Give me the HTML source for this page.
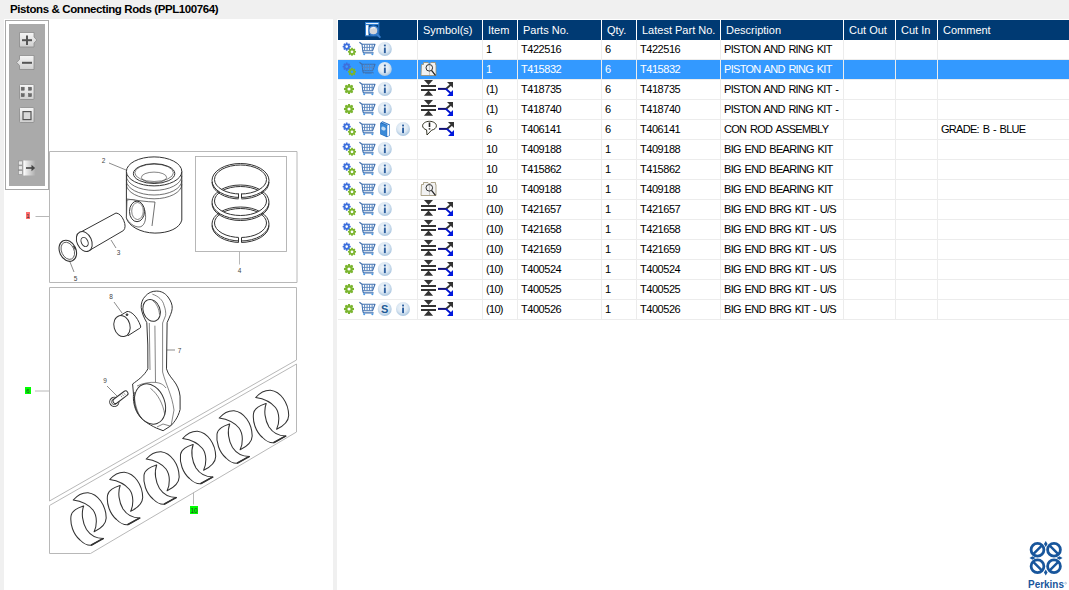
<!DOCTYPE html>
<html><head><meta charset="utf-8">
<style>
html,body{margin:0;padding:0;}
body{width:1069px;height:590px;overflow:hidden;background:#f0f0f0;position:relative;font-family:"Liberation Sans",sans-serif;}
#title{position:absolute;left:10px;top:2.3px;font-weight:bold;font-size:11.5px;letter-spacing:-0.4px;line-height:14px;color:#000;white-space:nowrap;}
#left{position:absolute;left:4px;top:20px;width:329px;height:570px;background:#fff;overflow:hidden;}
#right{position:absolute;left:337px;top:20px;width:732px;height:570px;background:#fff;overflow:hidden;}
.hd{position:absolute;top:0;height:20px;background:#003a73;}
.hdt{position:absolute;top:0;height:20px;line-height:20px;color:#fff;font-size:11px;white-space:nowrap;}
.row{position:absolute;left:1px;width:731px;height:19px;border-bottom:1px solid #ececec;}
.sel{background:#3399ff;}
.vl{position:absolute;top:20px;width:1px;height:280px;background:#ececec;}
.c{position:absolute;font-size:11px;letter-spacing:-0.7px;word-spacing:1.3px;line-height:19px;color:#000;white-space:nowrap;top:0;}
svg{overflow:visible;}
</style></head>
<body>

<div style="position:absolute;left:4px;top:19px;width:329px;height:1px;background:#fff"></div><div style="position:absolute;left:337px;top:19px;width:732px;height:1px;background:#fff"></div>
<div id="title">Pistons &amp; Connecting Rods (PPL100764)</div>
<div id="left"><svg style="position:absolute;left:0;top:0" width="329" height="570" viewBox="4 20 329 570">
<defs>
<linearGradient id="tabg" x1="0" y1="0" x2="1" y2="0"><stop offset="0" stop-color="#fafafa"/><stop offset="1" stop-color="#aaaaaa"/></linearGradient>
<linearGradient id="bg" x1="0" y1="0" x2="0" y2="1"><stop offset="0" stop-color="#f6f6f6"/><stop offset="1" stop-color="#cfcfcf"/></linearGradient>
<g id="pair" fill="#fff" stroke="#333" stroke-width="1.05" stroke-linejoin="round">
<path d="M73.2,500 C78,494.5 83,492.5 88,492.7 C98,494 106,505 106.2,518 C106,524 100,529 94.1,531.8 C97,526 97.5,516 93,510 C88.5,504.5 80,501 73.2,500 Z"/>
<path d="M83.7,506 C78,508 72,510 71,516 C70,524 73,534 80,540 C84,544 88,545.5 91,545.3 C95,543.5 99.5,540 103.5,538.4 C96,538.5 90.5,535.5 86.5,529.5 C82.5,523 81,513 83.7,506 Z"/>
<path d="M91,545.3l12.5,-6.9" stroke-width="1.6"/>
</g>
</defs>
<!-- toolbar -->
<rect x="5.5" y="20.5" width="43" height="169" fill="#fff" stroke="#a8a8a8"/>
<rect x="9" y="24" width="36" height="162" fill="#aaaaaa"/>
<g stroke="#8a8a8a" stroke-width="0.8">
<path d="M19.5,32.5h14.5v4.5l2.8,3l-2.8,3v4h-14.5z" fill="url(#bg)"/>
<path d="M19.5,55.5h14.5v14h-14.5v-4l-2.8,-3l2.8,-3z" fill="url(#bg)"/>
<rect x="19.5" y="84.5" width="14.5" height="15" rx="1" fill="url(#bg)"/>
<rect x="19.5" y="107.5" width="14.5" height="15" rx="1" fill="url(#bg)"/>
</g>
<g fill="#555">
<rect x="22" y="39.2" width="10" height="2"/><rect x="26" y="35.5" width="2" height="9.5"/>
<rect x="22" y="61.8" width="10" height="2"/>
</g><g fill="#6a6a6a" stroke="#5a5a5a" stroke-width="0.5">
<rect x="21.2" y="87.2" width="3" height="3"/><rect x="28.5" y="87.2" width="3" height="3"/>
<rect x="21.2" y="93.7" width="3" height="3"/><rect x="28.5" y="93.7" width="3" height="3"/>
</g>
<rect x="23" y="111.6" width="8" height="8" fill="#d8d8d8" stroke="#555" stroke-width="1.2"/>
<g>
<rect x="18.5" y="161" width="4" height="4" fill="#e8e8e8" stroke="#8a8a8a" stroke-width="0.6"/>
<rect x="18.5" y="165.8" width="4" height="4" fill="#e8e8e8" stroke="#8a8a8a" stroke-width="0.6"/>
<rect x="18.5" y="170.6" width="4" height="4" fill="#e8e8e8" stroke="#8a8a8a" stroke-width="0.6"/>
<rect x="23.7" y="160.5" width="12" height="15" fill="url(#tabg)"/>
<path d="M23.9,160.5v15" stroke="#fff" stroke-width="0.8"/>
<path d="M26,168h6.5" stroke="#444" stroke-width="1.6"/>
<path d="M31.5,164.7l3.6,3.3l-3.6,3.3z" fill="#444"/>
</g>
<!-- frames -->
<g fill="none" stroke="#b0b0b0" stroke-width="0.9">
<path d="M49.5,151.5h247.5v131h-247.5z"/>
<rect x="195.5" y="156.5" width="91" height="95"/>
<path d="M239.5,251.5v13"/>
<path d="M49.5,287.5h247v72.5l-247,141z"/>
<path d="M49.5,505.5l247,-141.5v68l-206,121.5h-41z"/>
<path d="M35.5,216.5h13.5M35,391h14M193.5,492.5v12"/>
</g>
<path d="M109,163l17,7M111,240l5,8M70,262l4,10M122,313l-8,-11M167,350h8M117,396l-10,-10" fill="none" stroke="#5a5a5a" stroke-width="0.7"/>
<!-- label boxes -->
<rect x="26" y="212" width="4" height="7" fill="#ff6e6e"/>
<rect x="25" y="387" width="6" height="7" fill="#00ff00"/>
<rect x="190" y="506" width="8" height="8" fill="#00ff00"/>
<g font-family="Liberation Sans" font-size="6" fill="#333" text-anchor="middle">
<text x="28" y="218">1</text><text x="28" y="392.8">6</text><text x="194" y="512.5" font-size="6.5">10</text>
</g>
<g font-family="Liberation Sans" font-size="6.5" fill="#444" text-anchor="middle">
<text x="103.5" y="163">2</text>
<text x="118.5" y="255">3</text>
<text x="239.5" y="272.5">4</text>
<text x="75.5" y="281">5</text>
<text x="179.5" y="353">7</text>
<text x="111" y="299">8</text>
<text x="105" y="383">9</text>
</g>
<!-- parts -->
<g fill="#fff" stroke="#333" stroke-width="1" stroke-linejoin="round">
<!-- rings -->
<g id="ring3">
<path fill-rule="evenodd" d="M212,224a28.5,17 0 1,0 57,0a28.5,17 0 1,0 -57,0zM214.5,223a26,14.5 0 1,0 52,0a26,14.5 0 1,0 -52,0z"/>
<path fill="none" d="M212,225.5a28.5,17 0 0,0 57,0"/>
</g>
<path fill-rule="evenodd" d="M212,202a28.5,17 0 1,0 57,0a28.5,17 0 1,0 -57,0zM214.5,201a26,14.5 0 1,0 52,0a26,14.5 0 1,0 -52,0z"/>
<path fill="none" d="M212,203.5a28.5,17 0 0,0 57,0"/>
<path fill-rule="evenodd" d="M212,180.5a28.5,17 0 1,0 57,0a28.5,17 0 1,0 -57,0zM214.5,179.5a26,14.5 0 1,0 52,0a26,14.5 0 1,0 -52,0z"/>
<path fill="none" d="M212,182a28.5,17 0 0,0 57,0"/>
<g stroke="none" fill="#fff">
<rect x="238.5" y="192" width="3" height="8"/><rect x="238.5" y="236" width="3" height="8"/>
</g>
<path fill="none" d="M238.5,193.5v5M241.5,193.5v5M238.5,237.5v5M241.5,237.5v5"/>
<!-- piston -->
<path d="M126.4,171.4v46.5c2,8 14,15 28.5,15.2c14,0 25,-5 26.9,-13v-48.7z"/>
<ellipse cx="154.1" cy="171.4" rx="27.7" ry="14.5"/>
<ellipse cx="154.1" cy="173.6" rx="20.7" ry="9.9" fill="none"/>
<ellipse cx="154.1" cy="172.8" rx="19.3" ry="8.7" fill="none" stroke-width="0.6"/>
<ellipse cx="154" cy="177.4" rx="12.6" ry="5.3" fill="none" stroke-width="0.6"/>
<path fill="none" d="M126.4,175.9a27.7,14.5 0 0,0 55.4,0M126.4,180.5a27.7,14.5 0 0,0 55.4,0M126.4,184.3a27.7,14.5 0 0,0 55.4,0" stroke-width="0.7"/>
<path fill="none" stroke-width="0.7" d="M127,199c8,1 20,3 28,3M155,202l-3,24"/>
<path d="M127,200c8,-2 16,3 18,11c2,9 -1,16 -6,16c-5,0 -10,-4 -12.6,-9z" stroke-width="0.7"/>
<ellipse cx="137" cy="211.4" rx="7.5" ry="10.3"/>
<ellipse cx="137.5" cy="211" rx="5.8" ry="8.5" fill="none" stroke-width="0.6"/>
<!-- pin -->
<path d="M80.5,232.2L116,213a6,10 -25 0,1 7.5,17.5L89.1,250.6z"/>
<ellipse cx="84.3" cy="241.5" rx="7.3" ry="10.5" transform="rotate(-25 84.3 241.5)"/>
<ellipse cx="84.6" cy="242" rx="3.3" ry="4.8" transform="rotate(-25 84.6 242)"/>
<!-- circlip -->
<ellipse cx="67.8" cy="250.8" rx="8.2" ry="11" transform="rotate(-25 67.8 250.8)" fill="none" stroke-width="1.1"/>
<ellipse cx="67.8" cy="250.8" rx="6.2" ry="9" transform="rotate(-25 67.8 250.8)" fill="none" stroke-width="0.7"/>
<path d="M73.5,246l2,3.5" stroke-width="1.3"/>
<!-- bush -->
<path d="M120,315.7L127,311.5C131,311 137,316 140.6,326C141,327.5 140,328.5 138.2,329.2L128,335.7z"/>
<ellipse cx="122" cy="326" rx="8" ry="10.7" transform="rotate(-15 122 326)"/>
<circle cx="127" cy="314.7" r="0.9" fill="#444"/>
<!-- bolt -->
<g transform="translate(114.3,401.9) rotate(-37)">
<circle r="4.6"/><circle r="2.8" fill="none" stroke-width="0.7"/>
<rect x="-1" y="-2.5" width="17.5" height="5" rx="2.5"/>
<path d="M9,-1v2M11,-1v2M13,-1v2" stroke-width="0.5"/>
</g>
<!-- con rod -->
<path d="M156.4,291.1C161,291 165,293 168,297C171,301 172.5,305 172.2,308.4C172,312 170,316 167.1,322.6L166.5,368.8C168,375 173,379 176,384C179,389 180.5,395 180.1,400L180.1,409.5C178,418 173,424 169.9,426.4L163.1,430.7L156.4,428.1C148,424 142,420 138,414C134,408 133,400 133.5,394.2L132.6,384C138,380 144,376 147.9,368.8L147.8,345L146.8,322.6C144,318 141.5,312 141.2,307.4C141,303 142.5,299 145.3,296.2C148,293 152,291 156.4,291.1Z"/>
<ellipse cx="151.6" cy="310.4" rx="8.4" ry="11.2" transform="rotate(-20 151.6 310.4)"/>
<ellipse cx="150" cy="404" rx="14.8" ry="20.7" transform="rotate(-20 150 404)"/>
<path fill="none" stroke-width="0.6" d="M152.4,294.2C158,296 163,300 164,305.3C165.5,309 166,313 165.6,315.5L162.6,323L162.6,372C166,385 172,395 174,410L171,426M149.3,323L150,370M154.9,325.7L155.5,382.4M137,386C143,383 150,382 155.5,382.4C160,383 163,384 166,388M134.5,392C134,402 137,413 142,419M152.4,300.3C157,304 159,309 159.5,314.5M150.4,388.3C158,394 163,404 164.8,414.6M157,427l6,-3l7,2"/>
</g>
<!-- bearing shells -->
<g transform="translate(0,0)" fill="#fff" stroke="#333" stroke-width="1.05" stroke-linejoin="round">
<path d="M73.2,500 C78,494.5 83,492.5 88,492.7 C98,494 106,505 106.2,518 C106,524 100,529 94.1,531.8 C97,526 97.5,516 93,510 C88.5,504.5 80,501 73.2,500 Z"/>
<path d="M83.7,506 C78,508 72,510 71,516 C70,524 73,534 80,540 C84,544 88,545.5 91,545.3 C95,543.5 99.5,540 103.5,538.4 C96,538.5 90.5,535.5 86.5,529.5 C82.5,523 81,513 83.7,506 Z"/>
<path d="M91,545.3l12.5,-6.9" stroke-width="1.6"/>
</g>
<g transform="translate(36.5,-20.5)" fill="#fff" stroke="#333" stroke-width="1.05" stroke-linejoin="round">
<path d="M73.2,500 C78,494.5 83,492.5 88,492.7 C98,494 106,505 106.2,518 C106,524 100,529 94.1,531.8 C97,526 97.5,516 93,510 C88.5,504.5 80,501 73.2,500 Z"/>
<path d="M83.7,506 C78,508 72,510 71,516 C70,524 73,534 80,540 C84,544 88,545.5 91,545.3 C95,543.5 99.5,540 103.5,538.4 C96,538.5 90.5,535.5 86.5,529.5 C82.5,523 81,513 83.7,506 Z"/>
<path d="M91,545.3l12.5,-6.9" stroke-width="1.6"/>
</g>
<g transform="translate(73,-41)" fill="#fff" stroke="#333" stroke-width="1.05" stroke-linejoin="round">
<path d="M73.2,500 C78,494.5 83,492.5 88,492.7 C98,494 106,505 106.2,518 C106,524 100,529 94.1,531.8 C97,526 97.5,516 93,510 C88.5,504.5 80,501 73.2,500 Z"/>
<path d="M83.7,506 C78,508 72,510 71,516 C70,524 73,534 80,540 C84,544 88,545.5 91,545.3 C95,543.5 99.5,540 103.5,538.4 C96,538.5 90.5,535.5 86.5,529.5 C82.5,523 81,513 83.7,506 Z"/>
<path d="M91,545.3l12.5,-6.9" stroke-width="1.6"/>
</g>
<g transform="translate(109.5,-61.5)" fill="#fff" stroke="#333" stroke-width="1.05" stroke-linejoin="round">
<path d="M73.2,500 C78,494.5 83,492.5 88,492.7 C98,494 106,505 106.2,518 C106,524 100,529 94.1,531.8 C97,526 97.5,516 93,510 C88.5,504.5 80,501 73.2,500 Z"/>
<path d="M83.7,506 C78,508 72,510 71,516 C70,524 73,534 80,540 C84,544 88,545.5 91,545.3 C95,543.5 99.5,540 103.5,538.4 C96,538.5 90.5,535.5 86.5,529.5 C82.5,523 81,513 83.7,506 Z"/>
<path d="M91,545.3l12.5,-6.9" stroke-width="1.6"/>
</g>
<g transform="translate(146,-82)" fill="#fff" stroke="#333" stroke-width="1.05" stroke-linejoin="round">
<path d="M73.2,500 C78,494.5 83,492.5 88,492.7 C98,494 106,505 106.2,518 C106,524 100,529 94.1,531.8 C97,526 97.5,516 93,510 C88.5,504.5 80,501 73.2,500 Z"/>
<path d="M83.7,506 C78,508 72,510 71,516 C70,524 73,534 80,540 C84,544 88,545.5 91,545.3 C95,543.5 99.5,540 103.5,538.4 C96,538.5 90.5,535.5 86.5,529.5 C82.5,523 81,513 83.7,506 Z"/>
<path d="M91,545.3l12.5,-6.9" stroke-width="1.6"/>
</g>
<g transform="translate(182.5,-102.5)" fill="#fff" stroke="#333" stroke-width="1.05" stroke-linejoin="round">
<path d="M73.2,500 C78,494.5 83,492.5 88,492.7 C98,494 106,505 106.2,518 C106,524 100,529 94.1,531.8 C97,526 97.5,516 93,510 C88.5,504.5 80,501 73.2,500 Z"/>
<path d="M83.7,506 C78,508 72,510 71,516 C70,524 73,534 80,540 C84,544 88,545.5 91,545.3 C95,543.5 99.5,540 103.5,538.4 C96,538.5 90.5,535.5 86.5,529.5 C82.5,523 81,513 83.7,506 Z"/>
<path d="M91,545.3l12.5,-6.9" stroke-width="1.6"/>
</g>
</svg>
</div>
<div id="right"><div class="hd" style="left:1px;width:79px"></div><div class="hd" style="left:81px;width:64px"></div><div class="hdt" style="left:86px">Symbol(s)</div><div class="hd" style="left:146px;width:34px"></div><div class="hdt" style="left:151px">Item</div><div class="hd" style="left:181px;width:83px"></div><div class="hdt" style="left:186px">Parts No.</div><div class="hd" style="left:265px;width:34px"></div><div class="hdt" style="left:270px">Qty.</div><div class="hd" style="left:300px;width:83px"></div><div class="hdt" style="left:305px">Latest Part No.</div><div class="hd" style="left:384px;width:122px"></div><div class="hdt" style="left:389px">Description</div><div class="hd" style="left:507px;width:51px"></div><div class="hdt" style="left:512px">Cut Out</div><div class="hd" style="left:559px;width:41px"></div><div class="hdt" style="left:564px">Cut In</div><div class="hd" style="left:601px;width:131px"></div><div class="hdt" style="left:606px">Comment</div><div class="row" style="top:20px"></div><div class="row sel" style="top:40px"></div><div class="row" style="top:60px"></div><div class="row" style="top:80px"></div><div class="row" style="top:100px"></div><div class="row" style="top:120px"></div><div class="row" style="top:140px"></div><div class="row" style="top:160px"></div><div class="row" style="top:180px"></div><div class="row" style="top:200px"></div><div class="row" style="top:220px"></div><div class="row" style="top:240px"></div><div class="row" style="top:260px"></div><div class="row" style="top:280px"></div><div class="vl" style="left:80px"></div><div class="vl" style="left:145px"></div><div class="vl" style="left:180px"></div><div class="vl" style="left:264px"></div><div class="vl" style="left:299px"></div><div class="vl" style="left:383px"></div><div class="vl" style="left:506px"></div><div class="vl" style="left:558px"></div><div class="vl" style="left:600px"></div><div class="c" style="left:149px;top:20px;color:#000;">1</div><div class="c" style="left:184px;top:20px;color:#000;letter-spacing:-0.45px;">T422516</div><div class="c" style="left:268px;top:20px;color:#000;">6</div><div class="c" style="left:303px;top:20px;color:#000;letter-spacing:-0.45px;">T422516</div><div class="c" style="left:387px;top:20px;color:#000;">PISTON AND RING KIT</div><div class="c" style="left:149px;top:40px;color:#fff;">1</div><div class="c" style="left:184px;top:40px;color:#fff;letter-spacing:-0.45px;">T415832</div><div class="c" style="left:268px;top:40px;color:#fff;">6</div><div class="c" style="left:303px;top:40px;color:#fff;letter-spacing:-0.45px;">T415832</div><div class="c" style="left:387px;top:40px;color:#fff;">PISTON AND RING KIT</div><div class="c" style="left:149px;top:60px;color:#000;">(1)</div><div class="c" style="left:184px;top:60px;color:#000;letter-spacing:-0.45px;">T418735</div><div class="c" style="left:268px;top:60px;color:#000;">6</div><div class="c" style="left:303px;top:60px;color:#000;letter-spacing:-0.45px;">T418735</div><div class="c" style="left:387px;top:60px;color:#000;">PISTON AND RING KIT -</div><div class="c" style="left:149px;top:80px;color:#000;">(1)</div><div class="c" style="left:184px;top:80px;color:#000;letter-spacing:-0.45px;">T418740</div><div class="c" style="left:268px;top:80px;color:#000;">6</div><div class="c" style="left:303px;top:80px;color:#000;letter-spacing:-0.45px;">T418740</div><div class="c" style="left:387px;top:80px;color:#000;">PISTON AND RING KIT -</div><div class="c" style="left:149px;top:100px;color:#000;">6</div><div class="c" style="left:184px;top:100px;color:#000;letter-spacing:-0.45px;">T406141</div><div class="c" style="left:268px;top:100px;color:#000;">6</div><div class="c" style="left:303px;top:100px;color:#000;letter-spacing:-0.45px;">T406141</div><div class="c" style="left:387px;top:100px;color:#000;">CON ROD ASSEMBLY</div><div class="c" style="left:604px;top:100px;color:#000;">GRADE: B - BLUE</div><div class="c" style="left:149px;top:120px;color:#000;">10</div><div class="c" style="left:184px;top:120px;color:#000;letter-spacing:-0.45px;">T409188</div><div class="c" style="left:268px;top:120px;color:#000;">1</div><div class="c" style="left:303px;top:120px;color:#000;letter-spacing:-0.45px;">T409188</div><div class="c" style="left:387px;top:120px;color:#000;">BIG END BEARING KIT</div><div class="c" style="left:149px;top:140px;color:#000;">10</div><div class="c" style="left:184px;top:140px;color:#000;letter-spacing:-0.45px;">T415862</div><div class="c" style="left:268px;top:140px;color:#000;">1</div><div class="c" style="left:303px;top:140px;color:#000;letter-spacing:-0.45px;">T415862</div><div class="c" style="left:387px;top:140px;color:#000;">BIG END BEARING KIT</div><div class="c" style="left:149px;top:160px;color:#000;">10</div><div class="c" style="left:184px;top:160px;color:#000;letter-spacing:-0.45px;">T409188</div><div class="c" style="left:268px;top:160px;color:#000;">1</div><div class="c" style="left:303px;top:160px;color:#000;letter-spacing:-0.45px;">T409188</div><div class="c" style="left:387px;top:160px;color:#000;">BIG END BEARING KIT</div><div class="c" style="left:149px;top:180px;color:#000;">(10)</div><div class="c" style="left:184px;top:180px;color:#000;letter-spacing:-0.45px;">T421657</div><div class="c" style="left:268px;top:180px;color:#000;">1</div><div class="c" style="left:303px;top:180px;color:#000;letter-spacing:-0.45px;">T421657</div><div class="c" style="left:387px;top:180px;color:#000;">BIG END BRG KIT - U/S</div><div class="c" style="left:149px;top:200px;color:#000;">(10)</div><div class="c" style="left:184px;top:200px;color:#000;letter-spacing:-0.45px;">T421658</div><div class="c" style="left:268px;top:200px;color:#000;">1</div><div class="c" style="left:303px;top:200px;color:#000;letter-spacing:-0.45px;">T421658</div><div class="c" style="left:387px;top:200px;color:#000;">BIG END BRG KIT - U/S</div><div class="c" style="left:149px;top:220px;color:#000;">(10)</div><div class="c" style="left:184px;top:220px;color:#000;letter-spacing:-0.45px;">T421659</div><div class="c" style="left:268px;top:220px;color:#000;">1</div><div class="c" style="left:303px;top:220px;color:#000;letter-spacing:-0.45px;">T421659</div><div class="c" style="left:387px;top:220px;color:#000;">BIG END BRG KIT - U/S</div><div class="c" style="left:149px;top:240px;color:#000;">(10)</div><div class="c" style="left:184px;top:240px;color:#000;letter-spacing:-0.45px;">T400524</div><div class="c" style="left:268px;top:240px;color:#000;">1</div><div class="c" style="left:303px;top:240px;color:#000;letter-spacing:-0.45px;">T400524</div><div class="c" style="left:387px;top:240px;color:#000;">BIG END BRG KIT - U/S</div><div class="c" style="left:149px;top:260px;color:#000;">(10)</div><div class="c" style="left:184px;top:260px;color:#000;letter-spacing:-0.45px;">T400525</div><div class="c" style="left:268px;top:260px;color:#000;">1</div><div class="c" style="left:303px;top:260px;color:#000;letter-spacing:-0.45px;">T400525</div><div class="c" style="left:387px;top:260px;color:#000;">BIG END BRG KIT - U/S</div><div class="c" style="left:149px;top:280px;color:#000;">(10)</div><div class="c" style="left:184px;top:280px;color:#000;letter-spacing:-0.45px;">T400526</div><div class="c" style="left:268px;top:280px;color:#000;">1</div><div class="c" style="left:303px;top:280px;color:#000;letter-spacing:-0.45px;">T400526</div><div class="c" style="left:387px;top:280px;color:#000;">BIG END BRG KIT - U/S</div><svg style="position:absolute;left:0;top:0" width="732" height="570" viewBox="337 20 732 570">
<defs>
<radialGradient id="ig" cx="0.45" cy="0.4" r="0.6">
<stop offset="0" stop-color="#f4f8fc"/><stop offset="0.6" stop-color="#dce8f3"/><stop offset="1" stop-color="#a9c5df"/>
</radialGradient>
<g id="gearB">
<path fill="#3d6fdc" d="M-1.04,-2.81 L-0.72,-4.04 L0.72,-4.04 L1.04,-2.81 L1.26,-2.72 L2.34,-3.36 L3.36,-2.34 L2.72,-1.26 L2.81,-1.04 L4.04,-0.72 L4.04,0.72 L2.81,1.04 L2.72,1.26 L3.36,2.34 L2.34,3.36 L1.26,2.72 L1.04,2.81 L0.72,4.04 L-0.72,4.04 L-1.04,2.81 L-1.26,2.72 L-2.34,3.36 L-3.36,2.34 L-2.72,1.26 L-2.81,1.04 L-4.04,0.72 L-4.04,-0.72 L-2.81,-1.04 L-2.72,-1.26 L-3.36,-2.34 L-2.34,-3.36 L-1.26,-2.72Z M1.3,0 A1.3,1.3 0 1,0 -1.3,0 A1.3,1.3 0 1,0 1.3,0Z" fill-rule="evenodd"/>
</g>
<g id="gearG">
<path fill="#7ab42e" d="M-1.04,-2.81 L-0.72,-4.04 L0.72,-4.04 L1.04,-2.81 L1.26,-2.72 L2.34,-3.36 L3.36,-2.34 L2.72,-1.26 L2.81,-1.04 L4.04,-0.72 L4.04,0.72 L2.81,1.04 L2.72,1.26 L3.36,2.34 L2.34,3.36 L1.26,2.72 L1.04,2.81 L0.72,4.04 L-0.72,4.04 L-1.04,2.81 L-1.26,2.72 L-2.34,3.36 L-3.36,2.34 L-2.72,1.26 L-2.81,1.04 L-4.04,0.72 L-4.04,-0.72 L-2.81,-1.04 L-2.72,-1.26 L-3.36,-2.34 L-2.34,-3.36 L-1.26,-2.72Z M1.4,0 A1.4,1.4 0 1,0 -1.4,0 A1.4,1.4 0 1,0 1.4,0Z" fill-rule="evenodd"/>
</g>
<g id="gearG1">
<path fill="#7ab52f" d="M-1.32,-3.57 L-0.90,-5.02 L0.90,-5.02 L1.32,-3.57 L1.59,-3.45 L2.92,-4.18 L4.18,-2.92 L3.45,-1.59 L3.57,-1.32 L5.02,-0.90 L5.02,0.90 L3.57,1.32 L3.45,1.59 L4.18,2.92 L2.92,4.18 L1.59,3.45 L1.32,3.57 L0.90,5.02 L-0.90,5.02 L-1.32,3.57 L-1.59,3.45 L-2.92,4.18 L-4.18,2.92 L-3.45,1.59 L-3.57,1.32 L-5.02,0.90 L-5.02,-0.90 L-3.57,-1.32 L-3.45,-1.59 L-4.18,-2.92 L-2.92,-4.18 L-1.59,-3.45Z M1.6,0 A1.6,1.6 0 1,0 -1.6,0 A1.6,1.6 0 1,0 1.6,0Z" fill-rule="evenodd"/>
</g>
<g id="cart" fill="none" stroke="#3f6fae" stroke-width="1.1" stroke-linejoin="round">
<path d="M0.4,0.2L3,2.2L3.8,8.8L4.4,10.9H14.6"/>
<path d="M3,2.2H16L13.5,8.8H3.8"/>
<path d="M5.6,2.5v6M8.1,2.5v6M10.6,2.5v6M13.1,2.5v6" stroke="#5a86bf" stroke-width="1"/>
<path d="M3.4,5.4h11.4" stroke="#5a86bf" stroke-width="0.9"/>
<circle cx="5.2" cy="12.3" r="1" fill="#4a9ae6" stroke="none"/>
<circle cx="13.4" cy="12.3" r="1" fill="#4a9ae6" stroke="none"/>
</g>
<g id="info">
<circle r="7" fill="url(#ig)"/>
<rect x="-0.9" y="-4.4" width="1.9" height="1.8" fill="#2d5f9f"/>
<rect x="-0.9" y="-1.4" width="1.9" height="5.5" fill="#2d5f9f"/>
</g>
<g id="sico">
<circle r="7" fill="url(#ig)"/>
<text x="0" y="4" text-anchor="middle" font-family="Liberation Sans" font-weight="bold" font-size="11" fill="#1d5a96">S</text>
</g>
<g id="book">
<path d="M0.2,2L2.5,0.2L10,3.6L10,14.6L6.9,16.2L0.2,13.2z" fill="#1f68bc"/>
<path d="M0.6,2.2L6.8,4.6L6.8,15.6L0.6,13z" fill="#3a8ad8"/>
<path d="M7.2,4.4L9.4,3.6L9.4,14.4L7.2,15.2z" fill="#fafcff"/>
<ellipse cx="3.5" cy="7.6" rx="2.3" ry="1.8" fill="#c4dcf2" transform="rotate(25 3.5 7.6)"/>
<path d="M2,1.3l6,2.6" stroke="#9cc6ee" stroke-width="0.8"/>
</g>
<g id="bkmag">
<path d="M0.5,2.5h2v-2h4.5l1.5,1.5l1.5,-1.5h4.5v2h0.5v11h-15z" fill="#f2f2f2" stroke="#9b8f70" stroke-width="0.8"/>
<path d="M8.5,2v11" stroke="#aaa" stroke-width="0.6"/>
<circle cx="8.3" cy="5.8" r="3.3" fill="none" stroke="#333" stroke-width="1"/>
<path d="M10.5,8.3l4,5" stroke="#222" stroke-width="1.3"/>
</g>
<g id="cut" fill="#333">
<path d="M3,-1h9l-4.5,5z"/>
<rect x="0" y="4" width="15" height="2"/>
<rect x="0" y="8" width="15" height="2"/>
<path d="M7.5,9.6l4.6,5.1h-9.2z"/>
</g>
<g id="arr">
<path d="M0,6.9h8.5" stroke="#111177" stroke-width="2"/>
<path d="M8,7l5,-4.5" stroke="#333" stroke-width="1.8"/>
<path d="M9,0h6v6z" fill="#333"/>
<path d="M8,7l5,4.5" stroke="#0010cc" stroke-width="1.8"/>
<path d="M9,14h6v-6z" fill="#0018dd"/>
</g>
<g id="bub">
<path d="M4,8.5C1.6,7.8 0,6.2 0,4.4C0,1.9 3.1,-0.1 6.9,-0.1C10.7,-0.1 13.8,1.9 13.8,4.4C13.8,6.6 11.6,8.3 9.1,8.7L4.4,13.6Z" fill="#fff" stroke="#2a2a1a" stroke-width="0.95" stroke-linejoin="round"/>
<rect x="6.1" y="1" width="1.6" height="4.6" fill="#222"/>
<rect x="6.1" y="6.8" width="1.6" height="1.4" fill="#222"/>
</g>
<g id="hdico">
<rect x="0.5" y="0.5" width="13.3" height="13.3" fill="none" stroke="#2f7fd2" stroke-width="1"/>
<rect x="0.5" y="0.5" width="13.3" height="2.6" fill="#2f7fd2"/>
<rect x="1" y="1.1" width="12.3" height="0.9" fill="#fff"/>
<rect x="1" y="3.1" width="2.6" height="10.2" fill="#fff"/>
<path d="M3.6,4.6v0.8M3.6,6.6v0.8M3.6,8.6v0.8M3.6,10.6v0.8" stroke="#2f7fd2" stroke-width="0.9"/>
<circle cx="8.4" cy="8.5" r="4.5" fill="#d4d6da" stroke="#3a7fd0" stroke-width="1.3"/>
<path d="M6.5,6.5a3,3 0 0,1 3.5,-0.5" stroke="#fff" stroke-width="0.9" fill="none"/>
<path d="M11.4,11.8l4,3.8" stroke="#3a80d0" stroke-width="2"/>
</g>
</defs>
<g transform="translate(365,22)">
<rect x="0.5" y="0.5" width="13.3" height="13.3" fill="none" stroke="#2f7fd2" stroke-width="1"/>
<rect x="0.5" y="0.5" width="13.3" height="2.6" fill="#2f7fd2"/>
<rect x="1" y="1.1" width="12.3" height="0.9" fill="#fff"/>
<rect x="1" y="3.1" width="2.6" height="10.2" fill="#fff"/>
<path d="M3.6,4.6v0.8M3.6,6.6v0.8M3.6,8.6v0.8M3.6,10.6v0.8" stroke="#2f7fd2" stroke-width="0.9"/>
<circle cx="8.4" cy="8.5" r="4.5" fill="#d4d6da" stroke="#3a7fd0" stroke-width="1.3"/>
<path d="M6.5,6.5a3,3 0 0,1 3.5,-0.5" stroke="#fff" stroke-width="0.9" fill="none"/>
<path d="M11.4,11.8l4,3.8" stroke="#3a80d0" stroke-width="2"/>
</g>
<g transform="translate(346.7,46.6)">
<path fill="#3d6fdc" d="M-1.04,-2.81 L-0.72,-4.04 L0.72,-4.04 L1.04,-2.81 L1.26,-2.72 L2.34,-3.36 L3.36,-2.34 L2.72,-1.26 L2.81,-1.04 L4.04,-0.72 L4.04,0.72 L2.81,1.04 L2.72,1.26 L3.36,2.34 L2.34,3.36 L1.26,2.72 L1.04,2.81 L0.72,4.04 L-0.72,4.04 L-1.04,2.81 L-1.26,2.72 L-2.34,3.36 L-3.36,2.34 L-2.72,1.26 L-2.81,1.04 L-4.04,0.72 L-4.04,-0.72 L-2.81,-1.04 L-2.72,-1.26 L-3.36,-2.34 L-2.34,-3.36 L-1.26,-2.72Z M1.3,0 A1.3,1.3 0 1,0 -1.3,0 A1.3,1.3 0 1,0 1.3,0Z" fill-rule="evenodd"/>
</g><g transform="translate(352,51.8)">
<path fill="#7ab42e" d="M-1.04,-2.81 L-0.72,-4.04 L0.72,-4.04 L1.04,-2.81 L1.26,-2.72 L2.34,-3.36 L3.36,-2.34 L2.72,-1.26 L2.81,-1.04 L4.04,-0.72 L4.04,0.72 L2.81,1.04 L2.72,1.26 L3.36,2.34 L2.34,3.36 L1.26,2.72 L1.04,2.81 L0.72,4.04 L-0.72,4.04 L-1.04,2.81 L-1.26,2.72 L-2.34,3.36 L-3.36,2.34 L-2.72,1.26 L-2.81,1.04 L-4.04,0.72 L-4.04,-0.72 L-2.81,-1.04 L-2.72,-1.26 L-3.36,-2.34 L-2.34,-3.36 L-1.26,-2.72Z M1.4,0 A1.4,1.4 0 1,0 -1.4,0 A1.4,1.4 0 1,0 1.4,0Z" fill-rule="evenodd"/>
</g><g transform="translate(359,42)" fill="none" stroke="#3f6fae" stroke-width="1.1" stroke-linejoin="round">
<path d="M0.4,0.2L3,2.2L3.8,8.8L4.4,10.9H14.6"/>
<path d="M3,2.2H16L13.5,8.8H3.8"/>
<path d="M5.6,2.5v6M8.1,2.5v6M10.6,2.5v6M13.1,2.5v6" stroke="#5a86bf" stroke-width="1"/>
<path d="M3.4,5.4h11.4" stroke="#5a86bf" stroke-width="0.9"/>
<circle cx="5.2" cy="12.3" r="1" fill="#4a9ae6" stroke="none"/>
<circle cx="13.4" cy="12.3" r="1" fill="#4a9ae6" stroke="none"/>
</g><g transform="translate(384.8,49)">
<circle r="7" fill="url(#ig)"/>
<rect x="-0.9" y="-4.4" width="1.9" height="1.8" fill="#2d5f9f"/>
<rect x="-0.9" y="-1.4" width="1.9" height="5.5" fill="#2d5f9f"/>
</g><g transform="translate(346.7,66.6)">
<path fill="#3d6fdc" d="M-1.04,-2.81 L-0.72,-4.04 L0.72,-4.04 L1.04,-2.81 L1.26,-2.72 L2.34,-3.36 L3.36,-2.34 L2.72,-1.26 L2.81,-1.04 L4.04,-0.72 L4.04,0.72 L2.81,1.04 L2.72,1.26 L3.36,2.34 L2.34,3.36 L1.26,2.72 L1.04,2.81 L0.72,4.04 L-0.72,4.04 L-1.04,2.81 L-1.26,2.72 L-2.34,3.36 L-3.36,2.34 L-2.72,1.26 L-2.81,1.04 L-4.04,0.72 L-4.04,-0.72 L-2.81,-1.04 L-2.72,-1.26 L-3.36,-2.34 L-2.34,-3.36 L-1.26,-2.72Z M1.3,0 A1.3,1.3 0 1,0 -1.3,0 A1.3,1.3 0 1,0 1.3,0Z" fill-rule="evenodd"/>
</g><g transform="translate(352,71.8)">
<path fill="#7ab42e" d="M-1.04,-2.81 L-0.72,-4.04 L0.72,-4.04 L1.04,-2.81 L1.26,-2.72 L2.34,-3.36 L3.36,-2.34 L2.72,-1.26 L2.81,-1.04 L4.04,-0.72 L4.04,0.72 L2.81,1.04 L2.72,1.26 L3.36,2.34 L2.34,3.36 L1.26,2.72 L1.04,2.81 L0.72,4.04 L-0.72,4.04 L-1.04,2.81 L-1.26,2.72 L-2.34,3.36 L-3.36,2.34 L-2.72,1.26 L-2.81,1.04 L-4.04,0.72 L-4.04,-0.72 L-2.81,-1.04 L-2.72,-1.26 L-3.36,-2.34 L-2.34,-3.36 L-1.26,-2.72Z M1.4,0 A1.4,1.4 0 1,0 -1.4,0 A1.4,1.4 0 1,0 1.4,0Z" fill-rule="evenodd"/>
</g><g transform="translate(359,62)" fill="none" stroke="#3f6fae" stroke-width="1.1" stroke-linejoin="round">
<path d="M0.4,0.2L3,2.2L3.8,8.8L4.4,10.9H14.6"/>
<path d="M3,2.2H16L13.5,8.8H3.8"/>
<path d="M5.6,2.5v6M8.1,2.5v6M10.6,2.5v6M13.1,2.5v6" stroke="#5a86bf" stroke-width="1"/>
<path d="M3.4,5.4h11.4" stroke="#5a86bf" stroke-width="0.9"/>
<circle cx="5.2" cy="12.3" r="1" fill="#4a9ae6" stroke="none"/>
<circle cx="13.4" cy="12.3" r="1" fill="#4a9ae6" stroke="none"/>
</g><g transform="translate(384.8,69)">
<circle r="7" fill="url(#ig)"/>
<rect x="-0.9" y="-4.4" width="1.9" height="1.8" fill="#2d5f9f"/>
<rect x="-0.9" y="-1.4" width="1.9" height="5.5" fill="#2d5f9f"/>
</g><g transform="translate(421,62)">
<path d="M0.5,2.5h2v-2h4.5l1.5,1.5l1.5,-1.5h4.5v2h0.5v11h-15z" fill="#f2f2f2" stroke="#9b8f70" stroke-width="0.8"/>
<path d="M8.5,2v11" stroke="#aaa" stroke-width="0.6"/>
<circle cx="8.3" cy="5.8" r="3.3" fill="none" stroke="#333" stroke-width="1"/>
<path d="M10.5,8.3l4,5" stroke="#222" stroke-width="1.3"/>
</g><g transform="translate(349,89)">
<path fill="#7ab52f" d="M-1.32,-3.57 L-0.90,-5.02 L0.90,-5.02 L1.32,-3.57 L1.59,-3.45 L2.92,-4.18 L4.18,-2.92 L3.45,-1.59 L3.57,-1.32 L5.02,-0.90 L5.02,0.90 L3.57,1.32 L3.45,1.59 L4.18,2.92 L2.92,4.18 L1.59,3.45 L1.32,3.57 L0.90,5.02 L-0.90,5.02 L-1.32,3.57 L-1.59,3.45 L-2.92,4.18 L-4.18,2.92 L-3.45,1.59 L-3.57,1.32 L-5.02,0.90 L-5.02,-0.90 L-3.57,-1.32 L-3.45,-1.59 L-4.18,-2.92 L-2.92,-4.18 L-1.59,-3.45Z M1.6,0 A1.6,1.6 0 1,0 -1.6,0 A1.6,1.6 0 1,0 1.6,0Z" fill-rule="evenodd"/>
</g><g transform="translate(359,82)" fill="none" stroke="#3f6fae" stroke-width="1.1" stroke-linejoin="round">
<path d="M0.4,0.2L3,2.2L3.8,8.8L4.4,10.9H14.6"/>
<path d="M3,2.2H16L13.5,8.8H3.8"/>
<path d="M5.6,2.5v6M8.1,2.5v6M10.6,2.5v6M13.1,2.5v6" stroke="#5a86bf" stroke-width="1"/>
<path d="M3.4,5.4h11.4" stroke="#5a86bf" stroke-width="0.9"/>
<circle cx="5.2" cy="12.3" r="1" fill="#4a9ae6" stroke="none"/>
<circle cx="13.4" cy="12.3" r="1" fill="#4a9ae6" stroke="none"/>
</g><g transform="translate(384.8,89)">
<circle r="7" fill="url(#ig)"/>
<rect x="-0.9" y="-4.4" width="1.9" height="1.8" fill="#2d5f9f"/>
<rect x="-0.9" y="-1.4" width="1.9" height="5.5" fill="#2d5f9f"/>
</g><g transform="translate(421,81)" fill="#333">
<path d="M3,-1h9l-4.5,5z"/>
<rect x="0" y="4" width="15" height="2"/>
<rect x="0" y="8" width="15" height="2"/>
<path d="M7.5,9.6l4.6,5.1h-9.2z"/>
</g><g transform="translate(438,82)">
<path d="M0,6.9h8.5" stroke="#111177" stroke-width="2"/>
<path d="M8,7l5,-4.5" stroke="#333" stroke-width="1.8"/>
<path d="M9,0h6v6z" fill="#333"/>
<path d="M8,7l5,4.5" stroke="#0010cc" stroke-width="1.8"/>
<path d="M9,14h6v-6z" fill="#0018dd"/>
</g><g transform="translate(349,109)">
<path fill="#7ab52f" d="M-1.32,-3.57 L-0.90,-5.02 L0.90,-5.02 L1.32,-3.57 L1.59,-3.45 L2.92,-4.18 L4.18,-2.92 L3.45,-1.59 L3.57,-1.32 L5.02,-0.90 L5.02,0.90 L3.57,1.32 L3.45,1.59 L4.18,2.92 L2.92,4.18 L1.59,3.45 L1.32,3.57 L0.90,5.02 L-0.90,5.02 L-1.32,3.57 L-1.59,3.45 L-2.92,4.18 L-4.18,2.92 L-3.45,1.59 L-3.57,1.32 L-5.02,0.90 L-5.02,-0.90 L-3.57,-1.32 L-3.45,-1.59 L-4.18,-2.92 L-2.92,-4.18 L-1.59,-3.45Z M1.6,0 A1.6,1.6 0 1,0 -1.6,0 A1.6,1.6 0 1,0 1.6,0Z" fill-rule="evenodd"/>
</g><g transform="translate(359,102)" fill="none" stroke="#3f6fae" stroke-width="1.1" stroke-linejoin="round">
<path d="M0.4,0.2L3,2.2L3.8,8.8L4.4,10.9H14.6"/>
<path d="M3,2.2H16L13.5,8.8H3.8"/>
<path d="M5.6,2.5v6M8.1,2.5v6M10.6,2.5v6M13.1,2.5v6" stroke="#5a86bf" stroke-width="1"/>
<path d="M3.4,5.4h11.4" stroke="#5a86bf" stroke-width="0.9"/>
<circle cx="5.2" cy="12.3" r="1" fill="#4a9ae6" stroke="none"/>
<circle cx="13.4" cy="12.3" r="1" fill="#4a9ae6" stroke="none"/>
</g><g transform="translate(384.8,109)">
<circle r="7" fill="url(#ig)"/>
<rect x="-0.9" y="-4.4" width="1.9" height="1.8" fill="#2d5f9f"/>
<rect x="-0.9" y="-1.4" width="1.9" height="5.5" fill="#2d5f9f"/>
</g><g transform="translate(421,101)" fill="#333">
<path d="M3,-1h9l-4.5,5z"/>
<rect x="0" y="4" width="15" height="2"/>
<rect x="0" y="8" width="15" height="2"/>
<path d="M7.5,9.6l4.6,5.1h-9.2z"/>
</g><g transform="translate(438,102)">
<path d="M0,6.9h8.5" stroke="#111177" stroke-width="2"/>
<path d="M8,7l5,-4.5" stroke="#333" stroke-width="1.8"/>
<path d="M9,0h6v6z" fill="#333"/>
<path d="M8,7l5,4.5" stroke="#0010cc" stroke-width="1.8"/>
<path d="M9,14h6v-6z" fill="#0018dd"/>
</g><g transform="translate(346.7,126.6)">
<path fill="#3d6fdc" d="M-1.04,-2.81 L-0.72,-4.04 L0.72,-4.04 L1.04,-2.81 L1.26,-2.72 L2.34,-3.36 L3.36,-2.34 L2.72,-1.26 L2.81,-1.04 L4.04,-0.72 L4.04,0.72 L2.81,1.04 L2.72,1.26 L3.36,2.34 L2.34,3.36 L1.26,2.72 L1.04,2.81 L0.72,4.04 L-0.72,4.04 L-1.04,2.81 L-1.26,2.72 L-2.34,3.36 L-3.36,2.34 L-2.72,1.26 L-2.81,1.04 L-4.04,0.72 L-4.04,-0.72 L-2.81,-1.04 L-2.72,-1.26 L-3.36,-2.34 L-2.34,-3.36 L-1.26,-2.72Z M1.3,0 A1.3,1.3 0 1,0 -1.3,0 A1.3,1.3 0 1,0 1.3,0Z" fill-rule="evenodd"/>
</g><g transform="translate(352,131.8)">
<path fill="#7ab42e" d="M-1.04,-2.81 L-0.72,-4.04 L0.72,-4.04 L1.04,-2.81 L1.26,-2.72 L2.34,-3.36 L3.36,-2.34 L2.72,-1.26 L2.81,-1.04 L4.04,-0.72 L4.04,0.72 L2.81,1.04 L2.72,1.26 L3.36,2.34 L2.34,3.36 L1.26,2.72 L1.04,2.81 L0.72,4.04 L-0.72,4.04 L-1.04,2.81 L-1.26,2.72 L-2.34,3.36 L-3.36,2.34 L-2.72,1.26 L-2.81,1.04 L-4.04,0.72 L-4.04,-0.72 L-2.81,-1.04 L-2.72,-1.26 L-3.36,-2.34 L-2.34,-3.36 L-1.26,-2.72Z M1.4,0 A1.4,1.4 0 1,0 -1.4,0 A1.4,1.4 0 1,0 1.4,0Z" fill-rule="evenodd"/>
</g><g transform="translate(359,122)" fill="none" stroke="#3f6fae" stroke-width="1.1" stroke-linejoin="round">
<path d="M0.4,0.2L3,2.2L3.8,8.8L4.4,10.9H14.6"/>
<path d="M3,2.2H16L13.5,8.8H3.8"/>
<path d="M5.6,2.5v6M8.1,2.5v6M10.6,2.5v6M13.1,2.5v6" stroke="#5a86bf" stroke-width="1"/>
<path d="M3.4,5.4h11.4" stroke="#5a86bf" stroke-width="0.9"/>
<circle cx="5.2" cy="12.3" r="1" fill="#4a9ae6" stroke="none"/>
<circle cx="13.4" cy="12.3" r="1" fill="#4a9ae6" stroke="none"/>
</g><g transform="translate(380,121)">
<path d="M0.2,2L2.5,0.2L10,3.6L10,14.6L6.9,16.2L0.2,13.2z" fill="#1f68bc"/>
<path d="M0.6,2.2L6.8,4.6L6.8,15.6L0.6,13z" fill="#3a8ad8"/>
<path d="M7.2,4.4L9.4,3.6L9.4,14.4L7.2,15.2z" fill="#fafcff"/>
<ellipse cx="3.5" cy="7.6" rx="2.3" ry="1.8" fill="#c4dcf2" transform="rotate(25 3.5 7.6)"/>
<path d="M2,1.3l6,2.6" stroke="#9cc6ee" stroke-width="0.8"/>
</g><g transform="translate(403,129)">
<circle r="7" fill="url(#ig)"/>
<rect x="-0.9" y="-4.4" width="1.9" height="1.8" fill="#2d5f9f"/>
<rect x="-0.9" y="-1.4" width="1.9" height="5.5" fill="#2d5f9f"/>
</g><g transform="translate(422.6,121.4)">
<path d="M4,8.5C1.6,7.8 0,6.2 0,4.4C0,1.9 3.1,-0.1 6.9,-0.1C10.7,-0.1 13.8,1.9 13.8,4.4C13.8,6.6 11.6,8.3 9.1,8.7L4.4,13.6Z" fill="#fff" stroke="#2a2a1a" stroke-width="0.95" stroke-linejoin="round"/>
<rect x="6.1" y="1" width="1.6" height="4.6" fill="#222"/>
<rect x="6.1" y="6.8" width="1.6" height="1.4" fill="#222"/>
</g><g transform="translate(439,122)">
<path d="M0,6.9h8.5" stroke="#111177" stroke-width="2"/>
<path d="M8,7l5,-4.5" stroke="#333" stroke-width="1.8"/>
<path d="M9,0h6v6z" fill="#333"/>
<path d="M8,7l5,4.5" stroke="#0010cc" stroke-width="1.8"/>
<path d="M9,14h6v-6z" fill="#0018dd"/>
</g><g transform="translate(346.7,146.6)">
<path fill="#3d6fdc" d="M-1.04,-2.81 L-0.72,-4.04 L0.72,-4.04 L1.04,-2.81 L1.26,-2.72 L2.34,-3.36 L3.36,-2.34 L2.72,-1.26 L2.81,-1.04 L4.04,-0.72 L4.04,0.72 L2.81,1.04 L2.72,1.26 L3.36,2.34 L2.34,3.36 L1.26,2.72 L1.04,2.81 L0.72,4.04 L-0.72,4.04 L-1.04,2.81 L-1.26,2.72 L-2.34,3.36 L-3.36,2.34 L-2.72,1.26 L-2.81,1.04 L-4.04,0.72 L-4.04,-0.72 L-2.81,-1.04 L-2.72,-1.26 L-3.36,-2.34 L-2.34,-3.36 L-1.26,-2.72Z M1.3,0 A1.3,1.3 0 1,0 -1.3,0 A1.3,1.3 0 1,0 1.3,0Z" fill-rule="evenodd"/>
</g><g transform="translate(352,151.8)">
<path fill="#7ab42e" d="M-1.04,-2.81 L-0.72,-4.04 L0.72,-4.04 L1.04,-2.81 L1.26,-2.72 L2.34,-3.36 L3.36,-2.34 L2.72,-1.26 L2.81,-1.04 L4.04,-0.72 L4.04,0.72 L2.81,1.04 L2.72,1.26 L3.36,2.34 L2.34,3.36 L1.26,2.72 L1.04,2.81 L0.72,4.04 L-0.72,4.04 L-1.04,2.81 L-1.26,2.72 L-2.34,3.36 L-3.36,2.34 L-2.72,1.26 L-2.81,1.04 L-4.04,0.72 L-4.04,-0.72 L-2.81,-1.04 L-2.72,-1.26 L-3.36,-2.34 L-2.34,-3.36 L-1.26,-2.72Z M1.4,0 A1.4,1.4 0 1,0 -1.4,0 A1.4,1.4 0 1,0 1.4,0Z" fill-rule="evenodd"/>
</g><g transform="translate(359,142)" fill="none" stroke="#3f6fae" stroke-width="1.1" stroke-linejoin="round">
<path d="M0.4,0.2L3,2.2L3.8,8.8L4.4,10.9H14.6"/>
<path d="M3,2.2H16L13.5,8.8H3.8"/>
<path d="M5.6,2.5v6M8.1,2.5v6M10.6,2.5v6M13.1,2.5v6" stroke="#5a86bf" stroke-width="1"/>
<path d="M3.4,5.4h11.4" stroke="#5a86bf" stroke-width="0.9"/>
<circle cx="5.2" cy="12.3" r="1" fill="#4a9ae6" stroke="none"/>
<circle cx="13.4" cy="12.3" r="1" fill="#4a9ae6" stroke="none"/>
</g><g transform="translate(384.8,149)">
<circle r="7" fill="url(#ig)"/>
<rect x="-0.9" y="-4.4" width="1.9" height="1.8" fill="#2d5f9f"/>
<rect x="-0.9" y="-1.4" width="1.9" height="5.5" fill="#2d5f9f"/>
</g><g transform="translate(346.7,166.6)">
<path fill="#3d6fdc" d="M-1.04,-2.81 L-0.72,-4.04 L0.72,-4.04 L1.04,-2.81 L1.26,-2.72 L2.34,-3.36 L3.36,-2.34 L2.72,-1.26 L2.81,-1.04 L4.04,-0.72 L4.04,0.72 L2.81,1.04 L2.72,1.26 L3.36,2.34 L2.34,3.36 L1.26,2.72 L1.04,2.81 L0.72,4.04 L-0.72,4.04 L-1.04,2.81 L-1.26,2.72 L-2.34,3.36 L-3.36,2.34 L-2.72,1.26 L-2.81,1.04 L-4.04,0.72 L-4.04,-0.72 L-2.81,-1.04 L-2.72,-1.26 L-3.36,-2.34 L-2.34,-3.36 L-1.26,-2.72Z M1.3,0 A1.3,1.3 0 1,0 -1.3,0 A1.3,1.3 0 1,0 1.3,0Z" fill-rule="evenodd"/>
</g><g transform="translate(352,171.8)">
<path fill="#7ab42e" d="M-1.04,-2.81 L-0.72,-4.04 L0.72,-4.04 L1.04,-2.81 L1.26,-2.72 L2.34,-3.36 L3.36,-2.34 L2.72,-1.26 L2.81,-1.04 L4.04,-0.72 L4.04,0.72 L2.81,1.04 L2.72,1.26 L3.36,2.34 L2.34,3.36 L1.26,2.72 L1.04,2.81 L0.72,4.04 L-0.72,4.04 L-1.04,2.81 L-1.26,2.72 L-2.34,3.36 L-3.36,2.34 L-2.72,1.26 L-2.81,1.04 L-4.04,0.72 L-4.04,-0.72 L-2.81,-1.04 L-2.72,-1.26 L-3.36,-2.34 L-2.34,-3.36 L-1.26,-2.72Z M1.4,0 A1.4,1.4 0 1,0 -1.4,0 A1.4,1.4 0 1,0 1.4,0Z" fill-rule="evenodd"/>
</g><g transform="translate(359,162)" fill="none" stroke="#3f6fae" stroke-width="1.1" stroke-linejoin="round">
<path d="M0.4,0.2L3,2.2L3.8,8.8L4.4,10.9H14.6"/>
<path d="M3,2.2H16L13.5,8.8H3.8"/>
<path d="M5.6,2.5v6M8.1,2.5v6M10.6,2.5v6M13.1,2.5v6" stroke="#5a86bf" stroke-width="1"/>
<path d="M3.4,5.4h11.4" stroke="#5a86bf" stroke-width="0.9"/>
<circle cx="5.2" cy="12.3" r="1" fill="#4a9ae6" stroke="none"/>
<circle cx="13.4" cy="12.3" r="1" fill="#4a9ae6" stroke="none"/>
</g><g transform="translate(384.8,169)">
<circle r="7" fill="url(#ig)"/>
<rect x="-0.9" y="-4.4" width="1.9" height="1.8" fill="#2d5f9f"/>
<rect x="-0.9" y="-1.4" width="1.9" height="5.5" fill="#2d5f9f"/>
</g><g transform="translate(346.7,186.6)">
<path fill="#3d6fdc" d="M-1.04,-2.81 L-0.72,-4.04 L0.72,-4.04 L1.04,-2.81 L1.26,-2.72 L2.34,-3.36 L3.36,-2.34 L2.72,-1.26 L2.81,-1.04 L4.04,-0.72 L4.04,0.72 L2.81,1.04 L2.72,1.26 L3.36,2.34 L2.34,3.36 L1.26,2.72 L1.04,2.81 L0.72,4.04 L-0.72,4.04 L-1.04,2.81 L-1.26,2.72 L-2.34,3.36 L-3.36,2.34 L-2.72,1.26 L-2.81,1.04 L-4.04,0.72 L-4.04,-0.72 L-2.81,-1.04 L-2.72,-1.26 L-3.36,-2.34 L-2.34,-3.36 L-1.26,-2.72Z M1.3,0 A1.3,1.3 0 1,0 -1.3,0 A1.3,1.3 0 1,0 1.3,0Z" fill-rule="evenodd"/>
</g><g transform="translate(352,191.8)">
<path fill="#7ab42e" d="M-1.04,-2.81 L-0.72,-4.04 L0.72,-4.04 L1.04,-2.81 L1.26,-2.72 L2.34,-3.36 L3.36,-2.34 L2.72,-1.26 L2.81,-1.04 L4.04,-0.72 L4.04,0.72 L2.81,1.04 L2.72,1.26 L3.36,2.34 L2.34,3.36 L1.26,2.72 L1.04,2.81 L0.72,4.04 L-0.72,4.04 L-1.04,2.81 L-1.26,2.72 L-2.34,3.36 L-3.36,2.34 L-2.72,1.26 L-2.81,1.04 L-4.04,0.72 L-4.04,-0.72 L-2.81,-1.04 L-2.72,-1.26 L-3.36,-2.34 L-2.34,-3.36 L-1.26,-2.72Z M1.4,0 A1.4,1.4 0 1,0 -1.4,0 A1.4,1.4 0 1,0 1.4,0Z" fill-rule="evenodd"/>
</g><g transform="translate(359,182)" fill="none" stroke="#3f6fae" stroke-width="1.1" stroke-linejoin="round">
<path d="M0.4,0.2L3,2.2L3.8,8.8L4.4,10.9H14.6"/>
<path d="M3,2.2H16L13.5,8.8H3.8"/>
<path d="M5.6,2.5v6M8.1,2.5v6M10.6,2.5v6M13.1,2.5v6" stroke="#5a86bf" stroke-width="1"/>
<path d="M3.4,5.4h11.4" stroke="#5a86bf" stroke-width="0.9"/>
<circle cx="5.2" cy="12.3" r="1" fill="#4a9ae6" stroke="none"/>
<circle cx="13.4" cy="12.3" r="1" fill="#4a9ae6" stroke="none"/>
</g><g transform="translate(384.8,189)">
<circle r="7" fill="url(#ig)"/>
<rect x="-0.9" y="-4.4" width="1.9" height="1.8" fill="#2d5f9f"/>
<rect x="-0.9" y="-1.4" width="1.9" height="5.5" fill="#2d5f9f"/>
</g><g transform="translate(421,182)">
<path d="M0.5,2.5h2v-2h4.5l1.5,1.5l1.5,-1.5h4.5v2h0.5v11h-15z" fill="#f2f2f2" stroke="#9b8f70" stroke-width="0.8"/>
<path d="M8.5,2v11" stroke="#aaa" stroke-width="0.6"/>
<circle cx="8.3" cy="5.8" r="3.3" fill="none" stroke="#333" stroke-width="1"/>
<path d="M10.5,8.3l4,5" stroke="#222" stroke-width="1.3"/>
</g><g transform="translate(346.7,206.6)">
<path fill="#3d6fdc" d="M-1.04,-2.81 L-0.72,-4.04 L0.72,-4.04 L1.04,-2.81 L1.26,-2.72 L2.34,-3.36 L3.36,-2.34 L2.72,-1.26 L2.81,-1.04 L4.04,-0.72 L4.04,0.72 L2.81,1.04 L2.72,1.26 L3.36,2.34 L2.34,3.36 L1.26,2.72 L1.04,2.81 L0.72,4.04 L-0.72,4.04 L-1.04,2.81 L-1.26,2.72 L-2.34,3.36 L-3.36,2.34 L-2.72,1.26 L-2.81,1.04 L-4.04,0.72 L-4.04,-0.72 L-2.81,-1.04 L-2.72,-1.26 L-3.36,-2.34 L-2.34,-3.36 L-1.26,-2.72Z M1.3,0 A1.3,1.3 0 1,0 -1.3,0 A1.3,1.3 0 1,0 1.3,0Z" fill-rule="evenodd"/>
</g><g transform="translate(352,211.8)">
<path fill="#7ab42e" d="M-1.04,-2.81 L-0.72,-4.04 L0.72,-4.04 L1.04,-2.81 L1.26,-2.72 L2.34,-3.36 L3.36,-2.34 L2.72,-1.26 L2.81,-1.04 L4.04,-0.72 L4.04,0.72 L2.81,1.04 L2.72,1.26 L3.36,2.34 L2.34,3.36 L1.26,2.72 L1.04,2.81 L0.72,4.04 L-0.72,4.04 L-1.04,2.81 L-1.26,2.72 L-2.34,3.36 L-3.36,2.34 L-2.72,1.26 L-2.81,1.04 L-4.04,0.72 L-4.04,-0.72 L-2.81,-1.04 L-2.72,-1.26 L-3.36,-2.34 L-2.34,-3.36 L-1.26,-2.72Z M1.4,0 A1.4,1.4 0 1,0 -1.4,0 A1.4,1.4 0 1,0 1.4,0Z" fill-rule="evenodd"/>
</g><g transform="translate(359,202)" fill="none" stroke="#3f6fae" stroke-width="1.1" stroke-linejoin="round">
<path d="M0.4,0.2L3,2.2L3.8,8.8L4.4,10.9H14.6"/>
<path d="M3,2.2H16L13.5,8.8H3.8"/>
<path d="M5.6,2.5v6M8.1,2.5v6M10.6,2.5v6M13.1,2.5v6" stroke="#5a86bf" stroke-width="1"/>
<path d="M3.4,5.4h11.4" stroke="#5a86bf" stroke-width="0.9"/>
<circle cx="5.2" cy="12.3" r="1" fill="#4a9ae6" stroke="none"/>
<circle cx="13.4" cy="12.3" r="1" fill="#4a9ae6" stroke="none"/>
</g><g transform="translate(384.8,209)">
<circle r="7" fill="url(#ig)"/>
<rect x="-0.9" y="-4.4" width="1.9" height="1.8" fill="#2d5f9f"/>
<rect x="-0.9" y="-1.4" width="1.9" height="5.5" fill="#2d5f9f"/>
</g><g transform="translate(421,201)" fill="#333">
<path d="M3,-1h9l-4.5,5z"/>
<rect x="0" y="4" width="15" height="2"/>
<rect x="0" y="8" width="15" height="2"/>
<path d="M7.5,9.6l4.6,5.1h-9.2z"/>
</g><g transform="translate(438,202)">
<path d="M0,6.9h8.5" stroke="#111177" stroke-width="2"/>
<path d="M8,7l5,-4.5" stroke="#333" stroke-width="1.8"/>
<path d="M9,0h6v6z" fill="#333"/>
<path d="M8,7l5,4.5" stroke="#0010cc" stroke-width="1.8"/>
<path d="M9,14h6v-6z" fill="#0018dd"/>
</g><g transform="translate(346.7,226.6)">
<path fill="#3d6fdc" d="M-1.04,-2.81 L-0.72,-4.04 L0.72,-4.04 L1.04,-2.81 L1.26,-2.72 L2.34,-3.36 L3.36,-2.34 L2.72,-1.26 L2.81,-1.04 L4.04,-0.72 L4.04,0.72 L2.81,1.04 L2.72,1.26 L3.36,2.34 L2.34,3.36 L1.26,2.72 L1.04,2.81 L0.72,4.04 L-0.72,4.04 L-1.04,2.81 L-1.26,2.72 L-2.34,3.36 L-3.36,2.34 L-2.72,1.26 L-2.81,1.04 L-4.04,0.72 L-4.04,-0.72 L-2.81,-1.04 L-2.72,-1.26 L-3.36,-2.34 L-2.34,-3.36 L-1.26,-2.72Z M1.3,0 A1.3,1.3 0 1,0 -1.3,0 A1.3,1.3 0 1,0 1.3,0Z" fill-rule="evenodd"/>
</g><g transform="translate(352,231.8)">
<path fill="#7ab42e" d="M-1.04,-2.81 L-0.72,-4.04 L0.72,-4.04 L1.04,-2.81 L1.26,-2.72 L2.34,-3.36 L3.36,-2.34 L2.72,-1.26 L2.81,-1.04 L4.04,-0.72 L4.04,0.72 L2.81,1.04 L2.72,1.26 L3.36,2.34 L2.34,3.36 L1.26,2.72 L1.04,2.81 L0.72,4.04 L-0.72,4.04 L-1.04,2.81 L-1.26,2.72 L-2.34,3.36 L-3.36,2.34 L-2.72,1.26 L-2.81,1.04 L-4.04,0.72 L-4.04,-0.72 L-2.81,-1.04 L-2.72,-1.26 L-3.36,-2.34 L-2.34,-3.36 L-1.26,-2.72Z M1.4,0 A1.4,1.4 0 1,0 -1.4,0 A1.4,1.4 0 1,0 1.4,0Z" fill-rule="evenodd"/>
</g><g transform="translate(359,222)" fill="none" stroke="#3f6fae" stroke-width="1.1" stroke-linejoin="round">
<path d="M0.4,0.2L3,2.2L3.8,8.8L4.4,10.9H14.6"/>
<path d="M3,2.2H16L13.5,8.8H3.8"/>
<path d="M5.6,2.5v6M8.1,2.5v6M10.6,2.5v6M13.1,2.5v6" stroke="#5a86bf" stroke-width="1"/>
<path d="M3.4,5.4h11.4" stroke="#5a86bf" stroke-width="0.9"/>
<circle cx="5.2" cy="12.3" r="1" fill="#4a9ae6" stroke="none"/>
<circle cx="13.4" cy="12.3" r="1" fill="#4a9ae6" stroke="none"/>
</g><g transform="translate(384.8,229)">
<circle r="7" fill="url(#ig)"/>
<rect x="-0.9" y="-4.4" width="1.9" height="1.8" fill="#2d5f9f"/>
<rect x="-0.9" y="-1.4" width="1.9" height="5.5" fill="#2d5f9f"/>
</g><g transform="translate(421,221)" fill="#333">
<path d="M3,-1h9l-4.5,5z"/>
<rect x="0" y="4" width="15" height="2"/>
<rect x="0" y="8" width="15" height="2"/>
<path d="M7.5,9.6l4.6,5.1h-9.2z"/>
</g><g transform="translate(438,222)">
<path d="M0,6.9h8.5" stroke="#111177" stroke-width="2"/>
<path d="M8,7l5,-4.5" stroke="#333" stroke-width="1.8"/>
<path d="M9,0h6v6z" fill="#333"/>
<path d="M8,7l5,4.5" stroke="#0010cc" stroke-width="1.8"/>
<path d="M9,14h6v-6z" fill="#0018dd"/>
</g><g transform="translate(346.7,246.6)">
<path fill="#3d6fdc" d="M-1.04,-2.81 L-0.72,-4.04 L0.72,-4.04 L1.04,-2.81 L1.26,-2.72 L2.34,-3.36 L3.36,-2.34 L2.72,-1.26 L2.81,-1.04 L4.04,-0.72 L4.04,0.72 L2.81,1.04 L2.72,1.26 L3.36,2.34 L2.34,3.36 L1.26,2.72 L1.04,2.81 L0.72,4.04 L-0.72,4.04 L-1.04,2.81 L-1.26,2.72 L-2.34,3.36 L-3.36,2.34 L-2.72,1.26 L-2.81,1.04 L-4.04,0.72 L-4.04,-0.72 L-2.81,-1.04 L-2.72,-1.26 L-3.36,-2.34 L-2.34,-3.36 L-1.26,-2.72Z M1.3,0 A1.3,1.3 0 1,0 -1.3,0 A1.3,1.3 0 1,0 1.3,0Z" fill-rule="evenodd"/>
</g><g transform="translate(352,251.8)">
<path fill="#7ab42e" d="M-1.04,-2.81 L-0.72,-4.04 L0.72,-4.04 L1.04,-2.81 L1.26,-2.72 L2.34,-3.36 L3.36,-2.34 L2.72,-1.26 L2.81,-1.04 L4.04,-0.72 L4.04,0.72 L2.81,1.04 L2.72,1.26 L3.36,2.34 L2.34,3.36 L1.26,2.72 L1.04,2.81 L0.72,4.04 L-0.72,4.04 L-1.04,2.81 L-1.26,2.72 L-2.34,3.36 L-3.36,2.34 L-2.72,1.26 L-2.81,1.04 L-4.04,0.72 L-4.04,-0.72 L-2.81,-1.04 L-2.72,-1.26 L-3.36,-2.34 L-2.34,-3.36 L-1.26,-2.72Z M1.4,0 A1.4,1.4 0 1,0 -1.4,0 A1.4,1.4 0 1,0 1.4,0Z" fill-rule="evenodd"/>
</g><g transform="translate(359,242)" fill="none" stroke="#3f6fae" stroke-width="1.1" stroke-linejoin="round">
<path d="M0.4,0.2L3,2.2L3.8,8.8L4.4,10.9H14.6"/>
<path d="M3,2.2H16L13.5,8.8H3.8"/>
<path d="M5.6,2.5v6M8.1,2.5v6M10.6,2.5v6M13.1,2.5v6" stroke="#5a86bf" stroke-width="1"/>
<path d="M3.4,5.4h11.4" stroke="#5a86bf" stroke-width="0.9"/>
<circle cx="5.2" cy="12.3" r="1" fill="#4a9ae6" stroke="none"/>
<circle cx="13.4" cy="12.3" r="1" fill="#4a9ae6" stroke="none"/>
</g><g transform="translate(384.8,249)">
<circle r="7" fill="url(#ig)"/>
<rect x="-0.9" y="-4.4" width="1.9" height="1.8" fill="#2d5f9f"/>
<rect x="-0.9" y="-1.4" width="1.9" height="5.5" fill="#2d5f9f"/>
</g><g transform="translate(421,241)" fill="#333">
<path d="M3,-1h9l-4.5,5z"/>
<rect x="0" y="4" width="15" height="2"/>
<rect x="0" y="8" width="15" height="2"/>
<path d="M7.5,9.6l4.6,5.1h-9.2z"/>
</g><g transform="translate(438,242)">
<path d="M0,6.9h8.5" stroke="#111177" stroke-width="2"/>
<path d="M8,7l5,-4.5" stroke="#333" stroke-width="1.8"/>
<path d="M9,0h6v6z" fill="#333"/>
<path d="M8,7l5,4.5" stroke="#0010cc" stroke-width="1.8"/>
<path d="M9,14h6v-6z" fill="#0018dd"/>
</g><g transform="translate(349,269)">
<path fill="#7ab52f" d="M-1.32,-3.57 L-0.90,-5.02 L0.90,-5.02 L1.32,-3.57 L1.59,-3.45 L2.92,-4.18 L4.18,-2.92 L3.45,-1.59 L3.57,-1.32 L5.02,-0.90 L5.02,0.90 L3.57,1.32 L3.45,1.59 L4.18,2.92 L2.92,4.18 L1.59,3.45 L1.32,3.57 L0.90,5.02 L-0.90,5.02 L-1.32,3.57 L-1.59,3.45 L-2.92,4.18 L-4.18,2.92 L-3.45,1.59 L-3.57,1.32 L-5.02,0.90 L-5.02,-0.90 L-3.57,-1.32 L-3.45,-1.59 L-4.18,-2.92 L-2.92,-4.18 L-1.59,-3.45Z M1.6,0 A1.6,1.6 0 1,0 -1.6,0 A1.6,1.6 0 1,0 1.6,0Z" fill-rule="evenodd"/>
</g><g transform="translate(359,262)" fill="none" stroke="#3f6fae" stroke-width="1.1" stroke-linejoin="round">
<path d="M0.4,0.2L3,2.2L3.8,8.8L4.4,10.9H14.6"/>
<path d="M3,2.2H16L13.5,8.8H3.8"/>
<path d="M5.6,2.5v6M8.1,2.5v6M10.6,2.5v6M13.1,2.5v6" stroke="#5a86bf" stroke-width="1"/>
<path d="M3.4,5.4h11.4" stroke="#5a86bf" stroke-width="0.9"/>
<circle cx="5.2" cy="12.3" r="1" fill="#4a9ae6" stroke="none"/>
<circle cx="13.4" cy="12.3" r="1" fill="#4a9ae6" stroke="none"/>
</g><g transform="translate(384.8,269)">
<circle r="7" fill="url(#ig)"/>
<rect x="-0.9" y="-4.4" width="1.9" height="1.8" fill="#2d5f9f"/>
<rect x="-0.9" y="-1.4" width="1.9" height="5.5" fill="#2d5f9f"/>
</g><g transform="translate(421,261)" fill="#333">
<path d="M3,-1h9l-4.5,5z"/>
<rect x="0" y="4" width="15" height="2"/>
<rect x="0" y="8" width="15" height="2"/>
<path d="M7.5,9.6l4.6,5.1h-9.2z"/>
</g><g transform="translate(438,262)">
<path d="M0,6.9h8.5" stroke="#111177" stroke-width="2"/>
<path d="M8,7l5,-4.5" stroke="#333" stroke-width="1.8"/>
<path d="M9,0h6v6z" fill="#333"/>
<path d="M8,7l5,4.5" stroke="#0010cc" stroke-width="1.8"/>
<path d="M9,14h6v-6z" fill="#0018dd"/>
</g><g transform="translate(349,289)">
<path fill="#7ab52f" d="M-1.32,-3.57 L-0.90,-5.02 L0.90,-5.02 L1.32,-3.57 L1.59,-3.45 L2.92,-4.18 L4.18,-2.92 L3.45,-1.59 L3.57,-1.32 L5.02,-0.90 L5.02,0.90 L3.57,1.32 L3.45,1.59 L4.18,2.92 L2.92,4.18 L1.59,3.45 L1.32,3.57 L0.90,5.02 L-0.90,5.02 L-1.32,3.57 L-1.59,3.45 L-2.92,4.18 L-4.18,2.92 L-3.45,1.59 L-3.57,1.32 L-5.02,0.90 L-5.02,-0.90 L-3.57,-1.32 L-3.45,-1.59 L-4.18,-2.92 L-2.92,-4.18 L-1.59,-3.45Z M1.6,0 A1.6,1.6 0 1,0 -1.6,0 A1.6,1.6 0 1,0 1.6,0Z" fill-rule="evenodd"/>
</g><g transform="translate(359,282)" fill="none" stroke="#3f6fae" stroke-width="1.1" stroke-linejoin="round">
<path d="M0.4,0.2L3,2.2L3.8,8.8L4.4,10.9H14.6"/>
<path d="M3,2.2H16L13.5,8.8H3.8"/>
<path d="M5.6,2.5v6M8.1,2.5v6M10.6,2.5v6M13.1,2.5v6" stroke="#5a86bf" stroke-width="1"/>
<path d="M3.4,5.4h11.4" stroke="#5a86bf" stroke-width="0.9"/>
<circle cx="5.2" cy="12.3" r="1" fill="#4a9ae6" stroke="none"/>
<circle cx="13.4" cy="12.3" r="1" fill="#4a9ae6" stroke="none"/>
</g><g transform="translate(384.8,289)">
<circle r="7" fill="url(#ig)"/>
<rect x="-0.9" y="-4.4" width="1.9" height="1.8" fill="#2d5f9f"/>
<rect x="-0.9" y="-1.4" width="1.9" height="5.5" fill="#2d5f9f"/>
</g><g transform="translate(421,281)" fill="#333">
<path d="M3,-1h9l-4.5,5z"/>
<rect x="0" y="4" width="15" height="2"/>
<rect x="0" y="8" width="15" height="2"/>
<path d="M7.5,9.6l4.6,5.1h-9.2z"/>
</g><g transform="translate(438,282)">
<path d="M0,6.9h8.5" stroke="#111177" stroke-width="2"/>
<path d="M8,7l5,-4.5" stroke="#333" stroke-width="1.8"/>
<path d="M9,0h6v6z" fill="#333"/>
<path d="M8,7l5,4.5" stroke="#0010cc" stroke-width="1.8"/>
<path d="M9,14h6v-6z" fill="#0018dd"/>
</g><g transform="translate(349,309)">
<path fill="#7ab52f" d="M-1.32,-3.57 L-0.90,-5.02 L0.90,-5.02 L1.32,-3.57 L1.59,-3.45 L2.92,-4.18 L4.18,-2.92 L3.45,-1.59 L3.57,-1.32 L5.02,-0.90 L5.02,0.90 L3.57,1.32 L3.45,1.59 L4.18,2.92 L2.92,4.18 L1.59,3.45 L1.32,3.57 L0.90,5.02 L-0.90,5.02 L-1.32,3.57 L-1.59,3.45 L-2.92,4.18 L-4.18,2.92 L-3.45,1.59 L-3.57,1.32 L-5.02,0.90 L-5.02,-0.90 L-3.57,-1.32 L-3.45,-1.59 L-4.18,-2.92 L-2.92,-4.18 L-1.59,-3.45Z M1.6,0 A1.6,1.6 0 1,0 -1.6,0 A1.6,1.6 0 1,0 1.6,0Z" fill-rule="evenodd"/>
</g><g transform="translate(359,302)" fill="none" stroke="#3f6fae" stroke-width="1.1" stroke-linejoin="round">
<path d="M0.4,0.2L3,2.2L3.8,8.8L4.4,10.9H14.6"/>
<path d="M3,2.2H16L13.5,8.8H3.8"/>
<path d="M5.6,2.5v6M8.1,2.5v6M10.6,2.5v6M13.1,2.5v6" stroke="#5a86bf" stroke-width="1"/>
<path d="M3.4,5.4h11.4" stroke="#5a86bf" stroke-width="0.9"/>
<circle cx="5.2" cy="12.3" r="1" fill="#4a9ae6" stroke="none"/>
<circle cx="13.4" cy="12.3" r="1" fill="#4a9ae6" stroke="none"/>
</g><g transform="translate(384.7,309)">
<circle r="7" fill="url(#ig)"/>
<text x="0" y="4" text-anchor="middle" font-family="Liberation Sans" font-weight="bold" font-size="11" fill="#1d5a96">S</text>
</g><g transform="translate(403,309)">
<circle r="7" fill="url(#ig)"/>
<rect x="-0.9" y="-4.4" width="1.9" height="1.8" fill="#2d5f9f"/>
<rect x="-0.9" y="-1.4" width="1.9" height="5.5" fill="#2d5f9f"/>
</g><g transform="translate(421,301)" fill="#333">
<path d="M3,-1h9l-4.5,5z"/>
<rect x="0" y="4" width="15" height="2"/>
<rect x="0" y="8" width="15" height="2"/>
<path d="M7.5,9.6l4.6,5.1h-9.2z"/>
</g><g transform="translate(438,302)">
<path d="M0,6.9h8.5" stroke="#111177" stroke-width="2"/>
<path d="M8,7l5,-4.5" stroke="#333" stroke-width="1.8"/>
<path d="M9,0h6v6z" fill="#333"/>
<path d="M8,7l5,4.5" stroke="#0010cc" stroke-width="1.8"/>
<path d="M9,14h6v-6z" fill="#0018dd"/>
</g>
</svg>
<svg style="position:absolute;left:0;top:0" width="732" height="570" viewBox="337 20 732 570">
<g fill="none" stroke="#18569c" stroke-width="2.8">
<circle cx="1037.5" cy="549.8" r="6.4"/>
<circle cx="1054" cy="549.8" r="6.4"/>
<circle cx="1037.5" cy="566.2" r="6.4"/>
<circle cx="1054" cy="566.2" r="6.4"/>
<path d="M1033,554.3l9,-9M1049.5,545.3l9,9M1033,561.7l9,9M1049.5,570.7l9,-9" stroke-width="2.4"/>
</g>
<g fill="#18569c">
<path d="M1045.75,541l1.8,3l-1.8,3l-1.8,-3z"/>
<path d="M1045.75,575.5l1.8,-3l-1.8,-3l-1.8,3z"/>
<path d="M1029.5,558l3,-1.8l3,1.8l-3,1.8z"/>
<path d="M1062.5,558l-3,-1.8l-3,1.8l3,1.8z"/>
</g>
<text x="1028" y="587.5" font-family="Liberation Sans" font-weight="bold" font-size="10.5" fill="#18569c" textLength="36" lengthAdjust="spacingAndGlyphs">Perkins</text>
<circle cx="1065.6" cy="583.2" r="0.9" fill="none" stroke="#6f93c0" stroke-width="0.5"/>
</svg>
</div>
</body></html>
